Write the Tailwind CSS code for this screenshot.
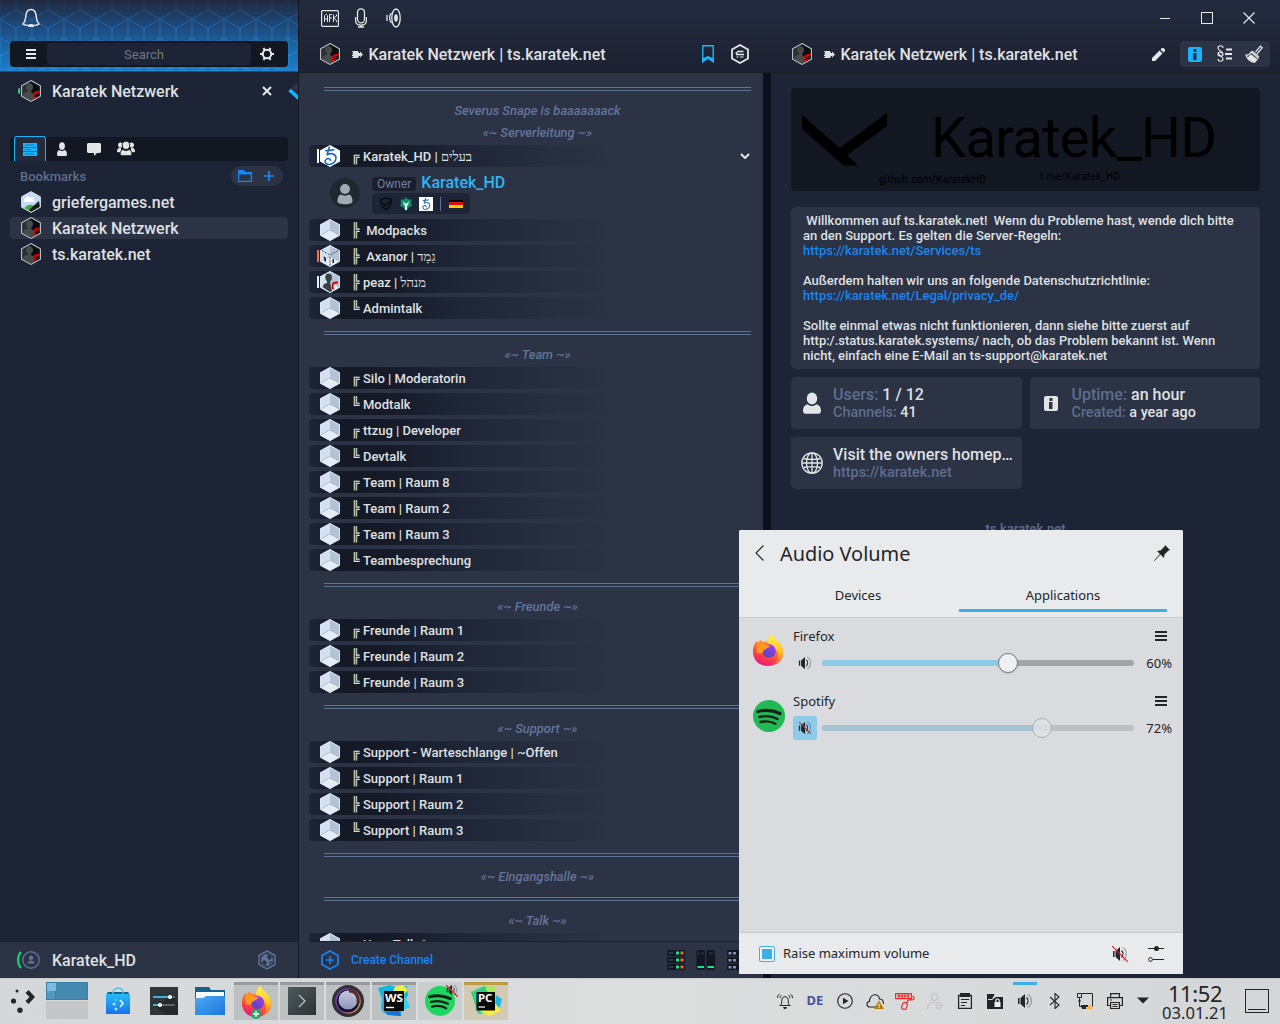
<!DOCTYPE html>
<html lang="de">
<head>
<meta charset="utf-8">
<title>Karatek Netzwerk</title>
<script src="https://cdn.jsdelivr.net/npm/@tailwindcss/browser@4"></script>
</head>
<body class="w-[1280px] h-[1024px] overflow-hidden relative flex flex-col bg-[#1c2436] text-[#dfe0e2] font-['Roboto','Liberation_Sans',sans-serif] font-medium">

<svg class="absolute w-0 h-0">
  <symbol id="cube" viewBox="0 0 20 22">
    <path d="M0 5.5 10 0V11L0 16.5Z" fill="#d2e1f2"/><path d="M10 0 20 5.5V16.5L10 11Z" fill="#b3c3d5"/><path d="M0 16.5 10 11 20 16.5 10 22Z" fill="#e3edf8"/>
    <path d="M10 .6 19.5 5.8V16.2L10 21.4.5 16.2V5.8Z" fill="none" stroke="#dce8f6" stroke-width=".9"/>
  </symbol>
  <symbol id="avatar" viewBox="0 0 20 22">
    <path d="M10 .6 19.4 5.8V16.2L10 21.4.6 16.2V5.8Z" fill="#0b0d10"/>
    <path d="M1.2 6 9 1.5v19L1.2 16Z" fill="#2c3032"/>
    <ellipse cx="8.6" cy="7" rx="3.4" ry="3.8" fill="#464b4c"/><path d="M6.6 9h4l-.6 3c3 1 4 3 3.600 7L10 20.500 2 16c0-3 2-4 5-4.500Z" fill="#464b4c"/>
    <path d="M18.500 12.300c-3.200-1-5.300.8-5.300 3.200 0 1.500.3 2.300 1 3" fill="none" stroke="#d00000" stroke-width="2.600"/>
    <path d="M10 .6 19.4 5.8V16.2L10 21.4.6 16.2V5.8Z" fill="none" stroke="#bfc5cb" stroke-width="1.100"/>
  </symbol>
  <symbol id="kana" viewBox="0 0 20 22">
    <path d="M5 5.500c3 .4 6 0 9.500-1M9.500 1.500c-.6 2.500-.8 4-2.500 8M6.500 10c4-2.500 9.500-1.500 9.500 3 0 3.500-3.500 6.500-7 6.500-4 0-5-3.500-2.500-5.500 2-1.300 4 0 4 2" fill="none" stroke="#2467b4" stroke-width="1.600"/>
  </symbol>
  <symbol id="person" viewBox="0 0 20 24">
    <ellipse cx="10" cy="7" rx="5.800" ry="6.600"/><path d="M5 13.500c3 2.600 7 2.600 10 0 3.500 1 5 3.500 5 7.500 0 2-1 3-3 3H3c-2 0-3-1-3-3 0-4 1.500-6.500 5-7.500Z"/>
  </symbol>
  <symbol id="speaker" viewBox="0 0 16 16"><path d="M1 5h1.500v6H1zM3.500 5 8 1v14l-4.500-4Z" fill="#232629"/><path d="M9.500 4.500c2 2 2 5 0 7" fill="none" stroke="#232629" stroke-width="1.200"/><path d="M10.500 1.500c5 2 5 11 0 13" fill="none" stroke="#232629" stroke-opacity=".35" stroke-width="1.300"/></symbol>
  <symbol id="menu" viewBox="0 0 12 10"><path d="M0 0h12v2H0zM0 4h12v2H0zM0 8h12v2H0z"/></symbol>
  <symbol id="spotify" viewBox="0 0 32 32"><circle cx="16" cy="16" r="16" fill="var(--disc)"/><path d="M5 11.500c8-2 15-1.300 22 2" fill="none" stroke="#191f1b" stroke-width="3.200" stroke-linecap="round"/><path d="M6.500 17c7-1.700 12.500-1 18 2M7.500 22c5.500-1.300 10.500-.7 15 1.700" fill="none" stroke="#191f1b" stroke-width="2.400" stroke-linecap="round"/></symbol>
  <symbol id="firefox" viewBox="0 0 32 32">
    <path d="M20 0c1 3 3 4 5.500 6.500C31 12 32 16 31 21c-1.500 7-8 11-15 11C7 32 1 26 1 18c0-5 1-8 4-11l1 2 2.500-3.500L10 8c2-1 4-.5 5 0 1-3 2-6 5-8Z" fill="url(#ffb)"/>
    <path d="M20 0c1 3 3 4 5.500 6.500C31 12 32 16 31 21c-1 5-5 9-9 9 4-4 5-9 3-13-2-3-6-5-10-9 1-3 2-6 5-8Z" fill="url(#ffy)"/>
    <circle cx="17" cy="17" r="6.800" fill="url(#ffp)"/>
    <path d="M5 10c3-2 6-1 8 1l5 .5c0 2-3 2.500-5 4-1.500 1-2.500 2-2.500 4-2-1-3.500 0-5.500-1-.5-3 0-6 0-8.500Z" fill="#ff9a1f"/>
  </symbol>
  <defs>
    <linearGradient id="ffb" x1=".7" y1="0" x2=".3" y2="1"><stop offset="0" stop-color="#ffcb2f"/><stop offset=".45" stop-color="#ff7a2c"/><stop offset=".75" stop-color="#fb3b47"/><stop offset="1" stop-color="#e31587"/></linearGradient>
    <linearGradient id="ffy" x1="0" y1="0" x2="0" y2="1"><stop offset="0" stop-color="#fff44f"/><stop offset=".6" stop-color="#ffc02e"/><stop offset="1" stop-color="#ff5a3a"/></linearGradient>
    <linearGradient id="ffp" x1=".8" y1="0" x2=".3" y2="1"><stop offset="0" stop-color="#a43cf0"/><stop offset="1" stop-color="#5246c0"/></linearGradient>
  </defs>
</svg>

<div class="h-[978px] flex">

  <!-- Sidebar -->
  <aside class="w-[299px] shrink-0 flex flex-col border-r border-[#15181e]">
    <header class="h-[72px] relative bg-[linear-gradient(#212a3e_0%,#1f3d66_22%,#1c568f_50%,#1c80cc_100%)] border-b border-[#1b4f80]">
      <svg class="absolute inset-0 w-[298px] h-[71px]">
        <defs>
          <pattern id="cubes" width="32" height="55.4" patternUnits="userSpaceOnUse" patternTransform="translate(0 10)">
            <path d="M16 0 32 9.200V27.700L16 37 0 27.700V9.200ZM0 9.200 16 18.500 32 9.200M16 18.500V55.400M0 27.700V46.200L16 37 32 46.200V27.700M0 46.200V55.400M16 55.400 0 64.700M16 55.400 32 64.700M0 46.200v18" fill="none" stroke="#2b9bea" stroke-opacity=".6"/>
          </pattern>
          <linearGradient id="fade" x2="0" y2="1"><stop offset="0" stop-color="#fff" stop-opacity=".15"/><stop offset=".5" stop-color="#fff" stop-opacity=".75"/><stop offset="1" stop-color="#fff"/></linearGradient>
          <mask id="fm"><rect width="298" height="71" fill="url(#fade)"/></mask>
        </defs>
        <rect width="298" height="71" fill="url(#cubes)" mask="url(#fm)"/>
      </svg>
      <div class="relative flex flex-col pt-2 px-[10px]">
        <svg class="w-[18px] h-5 ml-3" viewBox="0 0 18 20" fill="none" stroke="#e8e9ea" stroke-width="1.500"><path d="M1 16c2-2 2.500-4 3-9C4.500 3 6 1.500 9 1.500S13.500 3 14 7c.5 5 1 7 3 9-1 1-4 1.500-8 1.500S2 17 1 16Z"/><path d="M6.500 18.500h5l-1-2h-3Z" fill="#e8e9ea" stroke-width=".8"/></svg>
        <div class="mt-[13px] h-[26px] rounded bg-[#131722] flex items-center pl-4 pr-[14px]">
          <svg class="w-[10px] h-[10px]" viewBox="0 0 10 10" fill="#e8e9ea"><path d="M0 0h10v2H0zM0 4h10v2H0zM0 8h10v2H0z"/></svg>
          <div class="ml-[11px] w-[204px] h-[22px] pt-px rounded bg-[#1c2436] text-[#727881] text-[13px] font-normal flex items-center justify-center pr-[10px]">Search</div>
          <svg class="w-[14px] h-[14px] ml-[9px]" viewBox="0 0 14 14"><circle cx="7" cy="7" r="4.200" fill="none" stroke="#e8e9ea" stroke-width="2"/><path d="M3.500 1 5 3.500M10.500 1 9 3.500M0 7h2.500M14 7h-2.500M3.500 13 5 10.500M10.500 13 9 10.500" stroke="#e8e9ea" stroke-width="2"/></svg>
        </div>
      </div>
    </header>

    <div class="h-[38px] flex items-center pl-[18px] overflow-hidden">
      <span class="w-[2px] h-[6px] rounded-l bg-[#0fe27d]"></span>
      <svg class="w-5 h-[22px] ml-px"><use href="#avatar"/></svg>
      <span class="ml-[11px] pt-[2px] text-base">Karatek Netzwerk</span>
      <svg class="w-[10px] h-[10px] ml-auto" viewBox="0 0 10 10"><path d="m1 1 8 8M9 1 1 9" stroke="#e6e7e8" stroke-width="2"/></svg>
      <svg class="w-[10px] h-5 ml-4 mt-1" viewBox="0 0 10 20"><path d="M1 7 10-2v18Z" fill="#2b3345"/><path d="m1.500 7 11 10" stroke="#12b6ff" stroke-width="3.500"/></svg>
    </div>

    <nav class="mt-[27px] mx-[10px] h-6 shrink-0 rounded bg-[#131722] flex items-end pl-1">
      <div class="w-8 h-[25px] rounded-t-[3px] border border-b-0 border-[#14b4ff] bg-[#232b3d] flex items-center justify-center">
        <svg class="w-[14px] h-[13px]" viewBox="0 0 14 13"><path d="M0 0h14v4H0zM0 4.500h14v4H0zM0 9h14v4H0z" fill="#18b5fc"/><path d="M2 2h9M2 6.500h6M2 11h9" stroke="#14648f" stroke-width=".8"/></svg>
      </div>
      <div class="w-8 h-6 pb-px flex items-center justify-center"><svg class="w-[10px] h-[14px] fill-[#e3e4e5]" viewBox="0 0 20 24" preserveAspectRatio="none"><use href="#person" width="20" height="24"/></svg></div>
      <div class="w-8 h-6 flex items-center justify-center"><svg class="w-[14px] h-[13px]" viewBox="0 0 14 13"><path d="M1 0h12l1 1v8l-1 1h-3l-3 3V10H1L0 9V1Z" fill="#e3e4e5"/></svg></div>
      <div class="w-8 h-6 pb-px flex items-center justify-center">
        <svg class="w-[18px] h-[15px]" viewBox="0 0 18 15" fill="#e3e4e5"><circle cx="3.500" cy="4" r="2.500"/><circle cx="14.500" cy="4" r="2.500"/><path d="M0 11c0-3 1-4.500 4-4.500v5ZM18 11c0-3-1-4.500-4-4.500v5Z"/><g stroke="#131722" stroke-width=".9"><ellipse cx="9" cy="4.300" rx="3.700" ry="4.100"/><path d="M6 8.500c2 1.300 4 1.300 6 0 2 .5 2.800 2 2.800 4.500 0 1-.6 1.700-1.800 1.700H5c-1.200 0-1.800-.7-1.800-1.700 0-2.500.8-4 2.800-4.500Z"/></g></svg>
      </div>
    </nav>

    <div class="mt-[5px] h-5 ml-5 mr-[15px] flex items-center">
      <span class="pt-px text-[13px] text-[#5d6e8d]">Bookmarks</span>
      <div class="ml-auto w-[52px] h-5 rounded-full bg-[#2b3345] flex items-center pl-[7px]">
        <svg class="w-[14px] h-3" viewBox="0 0 14 12"><path d="M.6 3V11.400H13.400V3Z" fill="none" stroke="#1785f5" stroke-width="1.200"/><path d="M0 0h6l1.500 2H14v2.500H0Z" fill="#1785f5"/></svg>
        <svg class="w-[10px] h-[10px] ml-3" viewBox="0 0 10 10"><path d="M5 0v10M0 5h10" stroke="#1785f5" stroke-width="1.700"/></svg>
      </div>
    </div>

    <ul class="mt-[5px] mx-[10px] flex flex-col gap-1 text-base">
      <li class="h-[22px] flex items-center pl-[11px] gap-[11px]">
        <svg class="w-5 h-[22px]" viewBox="0 0 20 22"><path d="M10 .6 19.4 5.800V16.200L10 21.400.6 16.200V5.800Z" fill="#c4dbf7"/><path d="M3 8c2-4 5-3 6-1l3-1 2 5H3Z" fill="#fff"/><path d="M3 17.500c2-4 8-5 11-2l-4 6Z" fill="#4ca64c"/><path d="m8 19 10-9 1 6-9 5Z" fill="#14191f"/><path d="M10 .6 19.4 5.800V16.200L10 21.400.6 16.200V5.800Z" fill="none" stroke="#d8dde3"/></svg><span class="pt-px">griefergames.net</span></li>
      <li class="h-[22px] flex items-center pl-[11px] gap-[11px] rounded bg-[#2b3345]"><svg class="w-5 h-[22px]"><use href="#avatar"/></svg><span class="pt-px">Karatek Netzwerk</span></li>
      <li class="h-[22px] flex items-center pl-[11px] gap-[11px]"><svg class="w-5 h-[22px]"><use href="#avatar"/></svg><span class="pt-px">ts.karatek.net</span></li>
    </ul>

    <footer class="mt-auto h-[37px] bg-[#2b3345] border-t border-[#1a1f2a] flex items-center pl-4">
      <svg class="w-6 h-[18px]" viewBox="0 0 24 18" fill="none"><path d="M5 1C1 5 1 13 5 17" stroke="#10e080" stroke-width="1.800"/><circle cx="15" cy="9" r="8.200" stroke="#5d7398" stroke-width="1.400"/><circle cx="15" cy="6.800" r="2.300" fill="#5d7398"/><path d="M11.500 12.500c0-4 7-4 7 0Z" fill="#5d7398"/></svg>
      <span class="ml-3 pt-[2px] text-base">Karatek_HD</span>
      <svg class="ml-auto mr-[22px] w-[18px] h-5" viewBox="0 0 18 20"><path d="M9 1 17 5.500v9L9 19 1 14.500v-9Z" fill="none" stroke="#5d7398" stroke-width="1.500"/><circle cx="9" cy="10" r="6" fill="#5d7398"/><path d="M9 6 11 4l3 3-2 3-2-1ZM6 10l3 2-2 4-3-4ZM11 12l3-1-2 4Z" fill="#2b3345"/></svg>
    </footer>
  </aside>

  <!-- Main area -->
  <main class="w-[981px] flex flex-col">
    <header class="h-[73px] shrink-0 bg-[linear-gradient(#222b3e,#1e2232)] border-b border-[#1d1d1d]">
      <div class="h-[36px] flex items-center pl-[22px] pr-[25px]">
        <svg class="w-[18px] h-[17px]" viewBox="0 0 18 17" fill="none" stroke="#e6e7e8"><rect x=".6" y=".6" width="16.800" height="15.800" rx="1" stroke-width="1.200"/><path d="M3.500 12V5.500l1-1h1l1 1V12M3.500 9h3M8.500 12V4.500H11M8.500 8H11M12.500 4.500V12M15.500 4.500V6l-3 2 3 2.500V12"/></svg>
        <svg class="w-3 h-5 ml-[16px]" viewBox="0 0 12 20" fill="none" stroke="#e6e7e8" stroke-width="1.300"><rect x="2.500" y=".8" width="7" height="14" rx="3.500"/><path d="M.6 9v4.500c1 5 9.800 5 10.800 0V9M6 17v2M3 19h6"/></svg>
        <svg class="w-[15px] h-5 ml-[19px]" viewBox="0 0 15 20" fill="none" stroke="#e6e7e8" stroke-width="1.300"><ellipse cx="10" cy="10" rx="4.200" ry="9"/><ellipse cx="10" cy="10" rx="1.200" ry="3" fill="#e6e7e8"/><path d="M5.500 5C3 7 3 13 5.500 15M1 7v6"/></svg>
        <div class="ml-auto flex items-center">
          <svg class="w-[10px] h-[10px]" viewBox="0 0 10 10"><path d="M0 5.500h10" stroke="#e6e7e8"/></svg>
          <svg class="w-[12px] h-[12px] ml-[31px]" viewBox="0 0 12 12"><rect x=".5" y=".5" width="11" height="11" fill="none" stroke="#e6e7e8"/></svg>
          <svg class="w-[12px] h-[12px] ml-[30px]" viewBox="0 0 12 12"><path d="m.5.5 11 11M11.500.5l-11 11" stroke="#e6e7e8" stroke-width="1.200"/></svg>
        </div>
      </div>
      <div class="h-[36px] flex items-center">
        <div class="w-[464px] flex items-center pl-[21px] pr-[14px]">
          <svg class="w-5 h-[22px]"><use href="#avatar"/></svg>
          <svg class="w-[11px] h-[7px] ml-3 mt-px" viewBox="0 0 11 7"><path d="M0 0h6l1 2h1V.5L11 3.500 8 6.500V5H7L6 7H0l1.500-2H0V4h1L0 2.500h1.500Z" fill="#dfe0e2"/></svg>
          <span class="ml-[5.500px] pt-[2px] text-base whitespace-nowrap">Karatek Netzwerk | ts.karatek.net</span>
          <svg class="w-3 h-[18px] ml-auto" viewBox="0 0 12 18"><path d="M.8.700h10.400V16.500L6 12.500.8 16.500Z" fill="none" stroke="#18b5fc" stroke-width="1.400"/><path d="M0 13.500v4.500l6-4 6 4v-4.500L6 11Z" fill="#18b5fc"/></svg>
          <svg class="w-[18px] h-5 ml-[17px]" viewBox="0 0 18 20" fill="none" stroke="#e6e7e8"><path d="M9 1 17 5.500v9L9 19 1 14.500v-9Z" stroke-width="1.800"/><path d="M6 7.500h6.500M5 10.500h8M5.500 8v2" stroke-width="1.700"/><path d="M5.500 13h2M9 13h3.500" stroke-width="1.200"/></svg>
        </div>
        <div class="flex-1 flex items-center pl-[29px] pr-[10px]">
          <svg class="w-5 h-[22px]"><use href="#avatar"/></svg>
          <svg class="w-[11px] h-[7px] ml-3 mt-px" viewBox="0 0 11 7"><path d="M0 0h6l1 2h1V.5L11 3.500 8 6.500V5H7L6 7H0l1.500-2H0V4h1L0 2.500h1.500Z" fill="#dfe0e2"/></svg>
          <span class="ml-[5.500px] pt-[2px] text-base whitespace-nowrap">Karatek Netzwerk | ts.karatek.net</span>
          <svg class="w-[13px] h-[13px] ml-auto mr-[15px]" viewBox="0 0 13 13"><path d="M0 13V10L7.500 2.500l3 3L3 13ZM8.500 1.500 10 0h1.500L13 1.500V3l-1.500 1.500Z" fill="#e6e7e8"/></svg>
          <div class="w-[90px] h-[26px] rounded bg-[#2b3345] flex items-center pl-2">
            <svg class="w-[14px] h-[15px]" viewBox="0 0 14 15"><rect width="14" height="15" rx="2" fill="#18b5fc"/><path d="M5.500 2h3v3h-3zM5 6h3.500v7h-3.500z" fill="#2b3345"/></svg>
            <svg class="w-[15px] h-[18px] ml-[15px]" viewBox="0 0 15 18" fill="none" stroke="#e6e7e8"><path d="M6 3C6 0 1 0 1 3s5 3 5 6-5 3-5 0M1 9C1 6 6 7 6 10M1 7c0 4 5 4 5 7s-5 3-5 0" stroke-width="1.100"/><path d="M9 4.500h6M8 9h7M9 13.500h6" stroke-width="2"/></svg>
            <svg class="w-[18px] h-[18px] ml-[13px]" viewBox="0 0 18 18" fill="none" stroke="#e6e7e8" stroke-width="1.200"><path d="m10.500 7 5-6L17.300 2.700 12 9M7 6l7 6M6 7l7 6-3 4C6 17.500 2 14 1 10c2 .5 4-1 5-3Z"/><path d="m3 13 6 4 2-3-5-4Z" fill="#e6e7e8"/></svg>
          </div>
        </div>
      </div>
    </header>

    <div class="flex-1 min-h-0 flex">
      <!-- Channel tree -->
      <section class="w-[464px] shrink-0 flex flex-col bg-[#2b3345]">
        <div id="tree" class="h-[868px] overflow-hidden pt-[5px] text-[13px] flex flex-col"></div>
        <div class="flex-1 ml-[10px] border-t border-[#1b1e26] flex items-center pl-[11px]">
          <svg class="w-5 h-5" viewBox="0 0 20 20"><path d="M10 1 18 5.500v9L10 19 2 14.500v-9ZM10 6v8M6 10h8" fill="none" stroke="#1785f5" stroke-width="1.700"/></svg>
          <span class="ml-[11px] text-[12px] text-[#1785f5]">Create Channel</span>
          <svg class="w-[96px] h-5 ml-auto" viewBox="0 0 96 20">
            <g fill="#131722"><rect y="0" width="18" height="6" rx="1.500"/><rect y="7" width="18" height="6" rx="1.500"/><rect y="14" width="18" height="6" rx="1.500"/><rect x="29.500" width="8.500" height="20" rx="1.500"/><rect x="39.500" width="8.500" height="20" rx="1.500"/><rect x="60" width="19" height="6" rx="1.500"/><rect x="60" y="7" width="19" height="6" rx="1.500"/><rect x="60" y="14" width="19" height="6" rx="1.500"/></g>
            <path d="M9 1.500h3v3H9zM9 8.500h3v3H9zM9 15.500h3v3H9zM30.500 16h6.500v2h-6.500zM40.500 16h6.500v2h-6.500z" fill="#13e584"/><path d="M13.500 1.500h3v3h-3zM13.500 8.500h3v3h-3zM13.500 15.500h3v3h-3z" fill="#f36b34"/><path d="M1.500 2h5v2h-5zM1.500 9h5v2h-5zM1.500 16h5v2h-5zM31 2l2.700 1.500L36.500 2v3L33.700 3.500 31 5zM41 2.500h5.500L43.800 5z" fill="#2c3549"/><path d="M61.500 2h3v2.500h-3zM66 2h3v2.500h-3zM61.500 9h3v2.500h-3zM66 9h3v2.500h-3zM61.500 16h3v2.500h-3zM66 16h3v2.500h-3z" fill="#8191ad"/>
          </svg>
        </div>
      </section>
      <div class="w-2 shrink-0 bg-[#0b101b]"></div>

      <!-- Server information -->
      <section class="w-[509px] pl-5 pr-5 pt-[15px] flex flex-col">
        <svg class="w-[469px] h-[103px] rounded bg-[#131722]" viewBox="0 0 469 103">
          <path d="M11 27V41L52.500 77.500H67L56 67 96 38V25L48.500 60Z"/>
          <text x="140" y="69" font-size="56" font-weight="400" textLength="286">Karatek_HD</text>
          <text x="88" y="94.500" font-size="10" font-weight="400" textLength="107">github.com/KaratekHD</text>
          <text x="249" y="92" font-size="10" font-weight="400" textLength="80">t.me/Karatek_HD</text>
        </svg>
        <div class="mt-4 h-[162px] rounded bg-[#2b3345] px-3 py-[6px] text-[13px] leading-[15px] whitespace-pre"> Willkommen auf ts.karatek.net!  Wenn du Probleme hast, wende dich bitte
an den Support. Es gelten die Server-Regeln:
<span class="text-[#1785f5]">https://karatek.net/Services/ts</span>

Außerdem halten wir uns an folgende Datenschutzrichtlinie:
<span class="text-[#1785f5]">https://karatek.net/Legal/privacy_de/</span>

Sollte einmal etwas nicht funktionieren, dann siehe bitte zuerst auf
http:/.status.karatek.systems/ nach, ob das Problem bekannt ist. Wenn
nicht, einfach eine E-Mail an ts-support@karatek.net</div>
        <div class="mt-2 grid grid-cols-[231px_230px] gap-2">
          <div class="h-[52px] rounded bg-[#2b3345] flex items-center pl-3">
            <svg class="w-[18px] h-[22px] fill-[#e3e4e5]"><use href="#person"/></svg>
            <div class="ml-3 text-base leading-[18px]"><p><span class="text-[#5d6e8d]">Users:</span> 1 / 12</p><p class="text-[14.400px] leading-[17px]"><span class="text-[#5d6e8d]">Channels:</span> 41</p></div>
          </div>
          <div class="h-[52px] rounded bg-[#2b3345] flex items-center pl-[14px]">
            <svg class="w-[14px] h-[15px]" viewBox="0 0 14 15"><rect width="14" height="15" rx="2" fill="#e3e4e5"/><path d="M5.500 2h3v3h-3zM5 6h3.500v7h-3.500z" fill="#2b3345"/></svg>
            <div class="ml-[13.500px] text-base leading-[18px]"><p><span class="text-[#5d6e8d]">Uptime:</span> an hour</p><p class="text-[14.400px] leading-[17px]"><span class="text-[#5d6e8d]">Created:</span> a year ago</p></div>
          </div>
          <div class="h-[52px] rounded bg-[#2b3345] flex items-center pl-[10px]">
            <svg class="w-[22px] h-[22px]" viewBox="0 0 22 22" fill="none" stroke="#e3e4e5" stroke-width="1.300"><circle cx="11" cy="11" r="10.200"/><ellipse cx="11" cy="11" rx="5.500" ry="10.200"/><path d="M11 1v20M1 11h20M2.500 6.500c5 1 12 1 17 0M2.500 15.500c5-1 12-1 17 0"/></svg>
            <div class="ml-[10px] text-base leading-[18px] whitespace-nowrap"><p>Visit the owners homep…</p><p class="text-[14.400px] leading-[17px] text-[#5d6e8d]">https://karatek.net</p></div>
          </div>
        </div>
        <p class="mt-[30px] text-center text-[13px] leading-[20px] text-[#5d6e8d]">ts.karatek.net</p>
      </section>
    </div>
  </main>
</div>

<!-- Taskbar -->
<footer class="h-[46px] flex bg-[linear-gradient(90deg,#d6d7d8,#dcdddd_50%,#d5d6d7)] border-t border-[#c9cacc] font-['Noto_Sans',sans-serif] font-normal text-[#232629]">
  <div class="w-[46px] flex items-center justify-center pb-0.5"><svg class="w-6 h-6" viewBox="0 0 24 24" fill="#232629"><path d="m17.500 1-3 3 4 4-4 4 3 3 6.500-7Z"/><circle cx="6" cy="2" r="1.500"/><circle cx="2.500" cy="12" r="2.600"/><circle cx="9" cy="21.300" r="2.700"/></svg></div>
  <div class="w-[42px] pt-[3px] flex flex-col gap-px">
    <div class="h-[18px] bg-[#4489b0] border border-[#397fa6] flex flex-col"><span class="w-[9px] h-2 bg-[#7abde2]"></span><span class="w-[9px] flex-1 bg-[#5598bf] border-r border-[#397fa6]"></span></div>
    <div class="h-[18px] bg-[#c5c6c7]"></div>
  </div>
  <div class="ml-[7px] w-[46px] flex items-center justify-center pb-[2px]"><svg class="w-6 h-7" viewBox="0 0 24 28"><defs><linearGradient id="bag" x2="0" y2="1"><stop stop-color="#25bdf8"/><stop offset="1" stop-color="#1b70ea"/></linearGradient></defs><path d="M2 5h20l2 3H0Z" fill="#18648c"/><path d="M7 8V5c0-5 10-5 10 0v3" fill="none" stroke="#4fc2e8" stroke-width="1.300"/><path d="M0 7h24v20H0Z" fill="url(#bag)"/><path d="m14 13 3 3.500-3 3.500" fill="none" stroke="#d9f2ff" stroke-width="1.800"/><circle cx="8" cy="17" r="1.500" fill="#a7e1ff"/><circle cx="10" cy="22" r="1.500" fill="#a7e1ff"/><circle cx="10" cy="13" r=".8" fill="#a7e1ff"/></svg></div>
  <div class="w-[46px] flex items-center justify-center pb-[2px]"><svg class="w-7 h-7" viewBox="0 0 28 28"><rect width="28" height="28" fill="#303538"/><path d="m22 8 6 7v13H17L6 20Z" fill="#25292c"/><path d="M3 10h17M3 18h7" stroke="#3daee9" stroke-width="1.800"/><path d="M22 10h3M12 18h13" stroke="#5d6265" stroke-width="1.800"/><circle cx="20" cy="10" r="2.100" fill="#fff"/><circle cx="10" cy="18" r="2.100" fill="#fff"/></svg></div>
  <div class="w-[46px] flex items-center justify-center pb-[2px]"><svg class="w-[30px] h-7" viewBox="0 0 30 28"><defs><linearGradient id="fol" x2="1" y2="1"><stop stop-color="#4fa9f2"/><stop offset="1" stop-color="#1977dc"/></linearGradient></defs><path d="M0 0h14l2 3h14v12H0Z" fill="#17618f"/><path d="M1 5h28v8H1Z" fill="#f7fafc"/><path d="M0 11h8l3-2h19v19H0Z" fill="url(#fol)"/></svg></div>
  <div class="ml-px pt-[3px] flex gap-[2px]">
    <div class="w-11 h-[38px] bg-[#bec1c2] border-t-[3px] border-[#989a9b] flex items-center justify-center relative"><svg class="w-[31px] h-[31px] mb-[3px]"><use href="#firefox"/></svg><svg class="absolute left-[17px] top-[24px] w-[10px] h-[10px]" viewBox="0 0 10 10"><circle cx="5" cy="5" r="5" fill="#23a566"/><path d="M5 2v6M2 5h6" stroke="#fff" stroke-width="1.400"/></svg></div>
    <div class="w-11 h-[38px] bg-[#bec1c2] border-t-[3px] border-[#989a9b] flex items-center justify-center pb-[3px]"><svg class="w-7 h-7" viewBox="0 0 28 28"><defs><linearGradient id="term" x2="1" y2="1"><stop stop-color="#4d5c5d"/><stop offset="1" stop-color="#2d3135"/></linearGradient></defs><rect width="28" height="28" fill="url(#term)"/><path d="m11 8 6 6-6 6" fill="none" stroke="#b9c0c2" stroke-width="1.300"/></svg></div>
    <div class="w-11 h-[38px] bg-[#bec1c2] border-t-[3px] border-[#989a9b] flex items-center justify-center pb-[3px]"><svg class="w-8 h-8" viewBox="0 0 32 32"><defs><linearGradient id="ring" x2="1" y2=".6"><stop stop-color="#8c53b8"/><stop offset=".5" stop-color="#5f2b8f"/><stop offset="1" stop-color="#d08a5a"/></linearGradient><linearGradient id="orb" x2="0" y2="1"><stop stop-color="#c6c9df"/><stop offset="1" stop-color="#8c95bd"/></linearGradient></defs><circle cx="16" cy="16" r="16" fill="#2f3136"/><circle cx="16" cy="16" r="12" fill="#11132a" stroke="url(#ring)" stroke-width="1.500"/><circle cx="16" cy="15" r="9.500" fill="url(#orb)"/><path d="M17 6c7 0 10 6 9 12" fill="none" stroke="#5a2c28" stroke-width="3"/></svg></div>
    <div class="w-11 h-[38px] bg-[#bec1c2] border-t-[3px] border-[#989a9b] flex items-center justify-center pb-[3px]"><svg class="w-8 h-8" viewBox="0 0 32 32"><path d="m0 3 12-3 8 3 9-2 1 9-2 4 4 8-8 3-1 6-13-1-5-3-2-4 1-9Z" fill="#12b8e0"/><path d="m17 2 8-2 5 5-4 4-12-1Z" fill="#eef04a"/><path d="m7 27 14-2 2 6-13-1Z" fill="#1374d8"/><path d="m25 8 7 14-6 2Z" fill="#35d3ee"/><rect x="6" y="6" width="20" height="20" fill="#0a0a0a"/><text x="7" y="16.500" font-size="10.500" font-weight="700" fill="#fff" textLength="18" lengthAdjust="spacingAndGlyphs" font-family="Noto Sans">WS</text><path d="M8 22.500h8" stroke="#fff" stroke-width="1.400"/></svg></div>
    <div class="w-11 h-[38px] bg-[#cbcecf] flex items-center justify-center relative"><svg class="w-[30px] h-[30px] [--disc:#1ed760]"><use href="#spotify"/></svg><svg class="absolute right-1 top-[2px] w-3 h-3"><use href="#speaker"/></svg><svg class="absolute right-1 top-[3px] w-3 h-3" viewBox="0 0 12 12"><path d="m0 0 12 12" stroke="#da2a35" stroke-width="1.300"/></svg></div>
    <div class="w-11 h-[38px] bg-[#d3cab5] border-t-[3px] border-[#bd9b44] flex items-center justify-center pb-[3px]"><svg class="w-8 h-8" viewBox="0 0 32 32"><path d="m1 7 13-6 8 3 4 22-18 3Z" fill="#2fd283"/><path d="m15 2 9-1 2 9-8-2Z" fill="#a8e85a"/><path d="m26 10 6 4-2 8-5 1Z" fill="#1bb9e6"/><path d="m10 26 16-7 5 7-12 5Z" fill="#f6ee3e"/><rect x="6.500" y="7" width="18.500" height="18.500" fill="#0a0a0a"/><text x="8" y="16.500" font-size="10" font-weight="700" fill="#fff" textLength="14.500" lengthAdjust="spacingAndGlyphs" font-family="Noto Sans">PC</text><path d="M8.500 22h6.500" stroke="#b9b9b9" stroke-width="1.700"/></svg></div>
  </div>

  <div class="ml-auto flex pr-[11px] pb-[2px]">
    <div class="w-[30px] flex items-center justify-center"><svg class="w-4 h-4" viewBox="0 0 16 16" fill="none" stroke="#232629"><path d="M2.500 12.500h11M4 12c1-2 .5-4 1-6 .5-3 5.500-3 6 0 .5 2 0 4 1 6M2.500 1C1 2 .5 3.500.5 5M4.500 2C3.500 3 3 4 3 5M13.500 1c1.500 1 2 2.500 2 4M11.500 2c1 1 1.500 2 1.500 3"/><path d="M6 14h4l-1 2H7Z" fill="#232629" stroke="none"/></svg></div>
    <div class="w-[30px] flex items-center justify-center text-[13px] font-bold text-[#44549b]">DE</div>
    <div class="w-[30px] flex items-center justify-center"><svg class="w-4 h-4" viewBox="0 0 16 16"><circle cx="8" cy="8" r="7.300" fill="none" stroke="#232629" stroke-width="1.100"/><path d="m6 4.800 5.500 3.200L6 11.200Z" fill="#232629"/></svg></div>
    <div class="w-[30px] flex items-center justify-center"><svg class="w-[18px] h-4" viewBox="0 0 18 16"><path d="M10 14H4C0 14 0 9 3.500 8.500 4 0 13 0 13.500 6c3 0 4 2 4 5" fill="none" stroke="#232629" stroke-width="1.100"/><path d="m13 7.500 5 8.500H8Z" fill="#b07d0c"/><path d="M13 10.500v3M13 14v1" stroke="#fff"/></svg></div>
    <div class="w-[30px] flex items-center justify-center"><svg class="w-5 h-[18px]" viewBox="0 0 20 18" fill="none" stroke="#f02a2e" stroke-width="1.200"><path d="M.6 1.600h15.800v5H.6ZM2 4h13M4 2v4M7 2v4M10 2v4M13 2v4M16 4c4 0 4 4 1 4s-5-1-5 3"/><ellipse cx="9.500" cy="14" rx="2.600" ry="3.600" transform="rotate(20 9.500 14)"/></svg></div>
    <div class="w-[30px] flex items-center justify-center"><svg class="w-4 h-4" viewBox="0 0 16 16" fill="none" stroke="#b9bcbe"><circle cx="7.500" cy="4" r="3.500"/><path d="M.5 16c0-5 3-6.500 7-6.500"/><circle cx="12" cy="12.500" r="3" stroke="#b4c0d0"/><path d="M10.500 12.500h3"/></svg></div>
    <div class="w-[30px] flex items-center justify-center"><svg class="w-4 h-4" viewBox="0 0 16 16"><path d="M1.600 2.500h12.800v13H1.600Z" fill="none" stroke="#232629" stroke-width="1.300"/><path d="M3 0h10v4H3Z" fill="#232629"/><path d="M4 6.500h8M4 9.500h6M4 12.500h4" stroke="#232629" stroke-width="1.200"/></svg></div>
    <div class="w-[30px] flex items-center justify-center"><svg class="w-4 h-4" viewBox="0 0 16 16"><path d="M0 2V16H16V4H9L7 1H0Z" fill="#232629"/><path d="M8 1h7v3H9L5 7H1V6h4Z" fill="#d8d9da"/><path d="M7.500 9h6v5h-6Z" fill="#eceded"/><path d="M8.800 9V7.500c0-2 3.400-2 3.400 0V9" fill="none" stroke="#eceded" stroke-width="1.200"/></svg></div>
    <div class="w-[30px] flex items-center justify-center relative"><span class="absolute left-[3px] top-[3px] w-6 h-[3px] bg-[#3daee9]"></span><svg class="w-4 h-4"><use href="#speaker"/></svg></div>
    <div class="w-[30px] flex items-center justify-center"><svg class="w-4 h-4" viewBox="0 0 16 16"><path d="m3 4 9 8-4 3.500V.5L12 4l-9 8" fill="none" stroke="#232629" stroke-width="1.100"/></svg></div>
    <div class="w-[30px] flex items-center justify-center"><svg class="w-4 h-4" viewBox="0 0 16 16" fill="none" stroke="#232629"><path d="M.5.5h4v4h-4zM2.500 4.500v9h4M5 .5h10.500v13M1 8h3"/><path d="M4 12h7v2H9v2H5Z" fill="#232629" stroke="none"/><path d="m12.500 11 3.500 5H9.500Z" fill="#fdb13b" stroke="none"/></svg></div>
    <div class="w-[30px] flex items-center justify-center"><svg class="w-4 h-4" viewBox="0 0 16 16" fill="none" stroke="#232629" stroke-width="1.200"><path d="M3.600 4V.600h8.800V4M3 12.500H.600V4.600h14.800v7.900H13M3.600 9.500h8.800v6H3.600ZM3 7h2M5.500 11.500h5M5.500 13.500h5"/></svg></div>
    <div class="w-[26px] flex items-center justify-center"><svg class="w-3 h-[7px]" viewBox="0 0 12 7"><path d="M0 .500h12L6 6.500Z" fill="#232629"/></svg></div>
    <div class="w-[78px] flex flex-col items-center pt-[2px] whitespace-nowrap"><span class="text-[22px] leading-[24px] tracking-[-0.400px]">11:52</span><span class="text-[16.600px] leading-[16px]">03.01.21</span></div>
    <div class="ml-[11px] w-6 flex items-center justify-center"><div class="w-6 h-6 border border-[#232629] flex items-end px-[2px] pb-[2px]"><span class="w-full h-px bg-[#232629]"></span></div></div>
  </div>
</footer>

<!-- Volume popup -->
<div class="absolute left-[739px] top-[530px] w-[444px] h-[444px] rounded-t-[2px] overflow-hidden bg-[#dadbde] text-[#232629] font-['Noto_Sans',sans-serif] font-normal text-[13px] flex flex-col">
  <div class="h-[88px] bg-[#e9eaeb] border-b border-[#c9cacc] flex flex-col">
    <div class="h-[46px] flex items-center pl-4 pr-[13px]">
      <svg class="w-[9px] h-4" viewBox="0 0 9 16"><path d="M8.500.5 1 8l7.500 7.500" fill="none" stroke="#232629" stroke-width="1.100"/></svg>
      <span class="ml-4 pt-[2px] text-[19.900px]">Audio Volume</span>
      <svg class="w-4 h-4 ml-auto" viewBox="0 0 16 16"><path d="M11 0 16 5l-1.500.500L10.500 9.500 10 13 6.500 9.500.500 16 0 15.500 6 9 3 6l3.500-.5L10.500 1.500Z" fill="#232629"/></svg>
    </div>
    <div class="flex px-[15px] h-[36px]">
      <div class="w-[208px] flex items-center justify-center pt-1">Devices</div>
      <div class="w-[208px] flex items-center justify-center border-b-[3px] border-[#3daee9] pt-[7px] ml-[-3px]">Applications</div>
    </div>
  </div>
  <div class="h-[314px] shrink-0 pl-[14px] pr-[11px] pt-[8px] flex flex-col gap-[9px]">
    <div class="h-14 flex">
      <svg class="w-8 h-8 mt-[8px] -ml-px"><use href="#firefox"/></svg>
      <div class="ml-[9px] flex-1">
        <div class="h-5 flex items-center"><span class="pt-[2px]">Firefox</span><svg class="w-3 h-[10px] ml-auto mr-[5px]" fill="#232629"><use href="#menu"/></svg></div>
        <div class="h-6 mt-[5px] flex items-center">
          <div class="w-6 h-6 flex items-center justify-center"><svg class="w-[14px] h-[14px]"><use href="#speaker"/></svg></div>
          <div class="ml-[5px] w-[312px] h-[6px] rounded-full bg-[#a2a5a7] flex items-center"><span class="w-[177px] h-[6px] rounded-l-full bg-[#8ecbe9]"></span><span class="w-5 h-5 -ml-px rounded-full bg-[#eff0f1] border border-[#75787b] shadow-sm"></span></div>
          <span class="ml-auto pt-[2px]">60%</span>
        </div>
      </div>
    </div>
    <div class="h-14 flex">
      <svg class="w-8 h-8 mt-[9px] [--disc:#20b955]"><use href="#spotify"/></svg>
      <div class="ml-2 flex-1">
        <div class="h-5 flex items-center"><span class="pt-[2px]">Spotify</span><svg class="w-3 h-[10px] ml-auto mr-[5px]" fill="#232629"><use href="#menu"/></svg></div>
        <div class="h-6 mt-[5px] flex items-center">
          <div class="w-6 h-6 rounded-[2px] bg-[#8ecbe9] flex items-center justify-center relative"><svg class="w-[14px] h-[14px]"><use href="#speaker"/></svg><svg class="absolute left-[6px] top-[6px] w-3 h-3" viewBox="0 0 12 12"><path d="m0 0 12 12" stroke="#d0202c" stroke-width="1.100"/></svg></div>
          <div class="ml-[5px] w-[312px] h-[6px] rounded-full bg-[#bebfc2] flex items-center"><span class="w-[211px] h-[6px] rounded-l-full bg-[#a5c5d5]"></span><span class="w-5 h-5 -ml-px rounded-full bg-[#dfe3e6]/80 border border-[#aeb0b3]"></span></div>
          <span class="ml-auto pt-[2px]">72%</span>
        </div>
      </div>
    </div>
  </div>
  <div class="flex-1 bg-[#e9eaeb] border-t border-[#c9cacc] flex items-center pl-5 pr-[19px]">
    <div class="w-4 h-4 rounded-[2px] border border-[#3daee9] p-[2px] bg-[#f0f2f3]"><div class="w-full h-full bg-[#3daee9]"></div></div>
    <span class="ml-2">Raise maximum volume</span>
    <div class="ml-auto relative w-4 h-4"><svg class="w-4 h-4"><use href="#speaker"/></svg><svg class="absolute inset-0 w-4 h-4" viewBox="0 0 16 16"><path d="m0 0 16 16" stroke="#d0202c" stroke-width="1.200"/></svg></div>
    <svg class="w-4 h-4 ml-5" viewBox="0 0 16 16"><path d="M0 2.500h16M5 13.500h11" stroke="#232629" stroke-width="1.200"/><circle cx="8.500" cy="2.500" r="2.500" fill="#232629"/><circle cx="2.500" cy="13.500" r="1.900" fill="none" stroke="#232629"/></svg>
  </div>
</div>

<script>
const sep = () => `<div class="h-[22px] shrink-0 pl-[25px] pr-3 flex items-center"><div class="w-full h-1 -mt-px border-y border-[#5f7294]"></div></div>`;
const title = t => `<div class="h-[22px] shrink-0 pl-[25px] pr-3 flex items-center justify-center italic text-[12.900px] text-[#63759a]">${t}</div>`;
const marks = {
  kana: `<span class="w-[2px] h-[14px] bg-white"></span><svg class="w-5 h-[22px] ml-px" viewBox="0 0 20 22"><path d="M10 0 20 5.500V16.500L10 22 0 16.500V5.500Z" fill="#fff"/><use href="#kana"/></svg>`,
  orange: `<span class="w-[2px] h-[12px] bg-[#ff7038]"></span><svg class="w-5 h-[22px] ml-px" viewBox="0 0 20 22"><use href="#cube"/><path d="m2 5.500 8 4.500 8-4.500M10 12v9" fill="none" stroke="#30363c" stroke-width=".9" stroke-dasharray="2 1.300"/><path d="M3.500 11l2.500 2v4l-1.500-1ZM12.500 14h1.500v4h-1.500Z" fill="#20262c"/></svg>`,
  red: `<span class="w-[2px] h-[12px] bg-[#e8eef6]"></span><svg class="w-5 h-[22px] ml-px" viewBox="0 0 20 22"><use href="#cube"/><ellipse cx="8.600" cy="6.500" rx="3.300" ry="4" fill="#3b4143"/><path d="M7 9h3l.5 4 1.500 7-2 1-7-4.500c0-3 1-4 4-4.500Z" fill="#3b4143"/><path d="M18 11.500c-4-.5-5.500 1-5.500 3.500 0 1.500.3 2.500 1 3.300" fill="none" stroke="#d80000" stroke-width="2"/></svg>`,
  none: `<span class="w-[2px]"></span><svg class="w-5 h-[22px] ml-px"><use href="#cube"/></svg>`
};
const ch = (box, name, o = {}) => `<div class="h-[22px] shrink-0 mt-px mb-[3px] ml-[10px] rounded-l bg-[linear-gradient(90deg,#1e2537_0,#151925_36px,#161a27_75px,#1d2537_145px,#2b3345_300px)] flex items-center pl-2 whitespace-pre">${marks[o.m || 'none']}<span class="ml-[11px] w-[12px] pt-px text-[14px] font-normal font-['DejaVu_Sans_Mono',monospace]">${box}</span><span class="pt-px font-['Roboto','Liberation_Serif',serif]">${name}</span>${o.open ? '<svg class="w-[10px] h-[6px] ml-auto mr-[13px]" viewBox="0 0 10 6"><path d="m1 1 4 4 4-4" fill="none" stroke="#e6e7e8" stroke-width="2"/></svg>' : ''}</div>`;
const client = `<div class="h-12 shrink-0 flex pl-[31px] pt-[2px]">
  <svg class="w-[30px] h-[30px] mt-[6px]" viewBox="0 0 30 30"><circle cx="15" cy="15" r="15" fill="#1e292d"/><circle cx="15" cy="11" r="5" fill="#9fabb1"/><path d="M7.500 24c0-5 1.500-7 3.500-7.500 2.500 1.500 5.500 1.500 8 0 2 .5 3.500 2.500 3.500 7.500-1 3-14 3-15 0Z" fill="#9fabb1"/></svg>
  <div class="ml-3 flex flex-col">
    <div class="h-[21px] flex items-center gap-[5px]"><span class="h-[14px] mt-[3px] px-[5px] rounded-[3px] bg-[#1a1f2d] text-[12px] leading-[14px] font-normal text-[#6c7fa3]">Owner</span><span class="text-base text-[#2cb6f5]">Karatek_HD</span></div>
    <div class="w-[98px] h-[21px] rounded bg-[#1c2436] flex items-center pl-2">
      <svg class="w-3 h-[13px]" viewBox="0 0 12 13"><path d="M6 .800 11 2.500c.5 5-1 8-5 9.800C2 10.500.5 7.500 1 2.500ZM3 6l2.500 2.500L10 4.500" fill="none" stroke="#06080b" stroke-width="1.300"/></svg>
      <svg class="w-3 h-[14px] ml-2" viewBox="0 0 12 14"><path d="M6 0 8 2.500h3.500L11 6l1 3-3 1-3 4-3-4-3-1 1-3L.5 2.500H4Z" fill="#0d8f6b"/><path d="M3.500 4v3l1.500 2v4h2V9l1.500-2V4L7 6.500H5Z" fill="#f4f7f6"/></svg>
      <svg class="w-[14px] h-[14px] ml-[7px] bg-white"><use href="#kana"/></svg>
      <span class="w-px h-[14px] ml-[7px] bg-[#5d7398]"></span>
      <span class="ml-2 w-[14px] h-[8px] flex flex-col"><i class="flex-1 bg-black"></i><i class="flex-1 bg-[#dd1010]"></i><i class="flex-1 bg-[#ffce00]"></i></span>
    </div>
  </div></div>`;
document.getElementById('tree').innerHTML = [
  sep(), title('Severus Snape is baaaaaaack'), title('«~ Serverleitung ~»'),
  ch('╔', 'Karatek_HD | בעלים', {m: 'kana', open: true}), client,
  ch('╠', ' Modpacks'), ch('╠', ' Axanor | גַמָד', {m: 'orange'}), ch('╠', 'peaz | מנהל', {m: 'red'}), ch('╚', 'Admintalk'),
  sep(), title('«~ Team ~»'),
  ch('╔', 'Silo | Moderatorin'), ch('╚', 'Modtalk'), ch('╔', 'ttzug | Developer'), ch('╚', 'Devtalk'),
  ch('╔', 'Team | Raum 8'), ch('╠', 'Team | Raum 2'), ch('╠', 'Team | Raum 3'), ch('╚', 'Teambesprechung'),
  sep(), title('«~ Freunde ~»'),
  ch('╔', 'Freunde | Raum 1'), ch('╠', 'Freunde | Raum 2'), ch('╚', 'Freunde | Raum 3'),
  sep(), title('«~ Support ~»'),
  ch('╔', 'Support - Warteschlange | ~Offen'), ch('╠', 'Support | Raum 1'), ch('╠', 'Support | Raum 2'), ch('╚', 'Support | Raum 3'),
  sep(), title('«~ Eingangshalle ~»'), sep(), title('«~ Talk ~»'), ch('╔', 'User Talk 1')
].join('');
</script>
</body>
</html>
